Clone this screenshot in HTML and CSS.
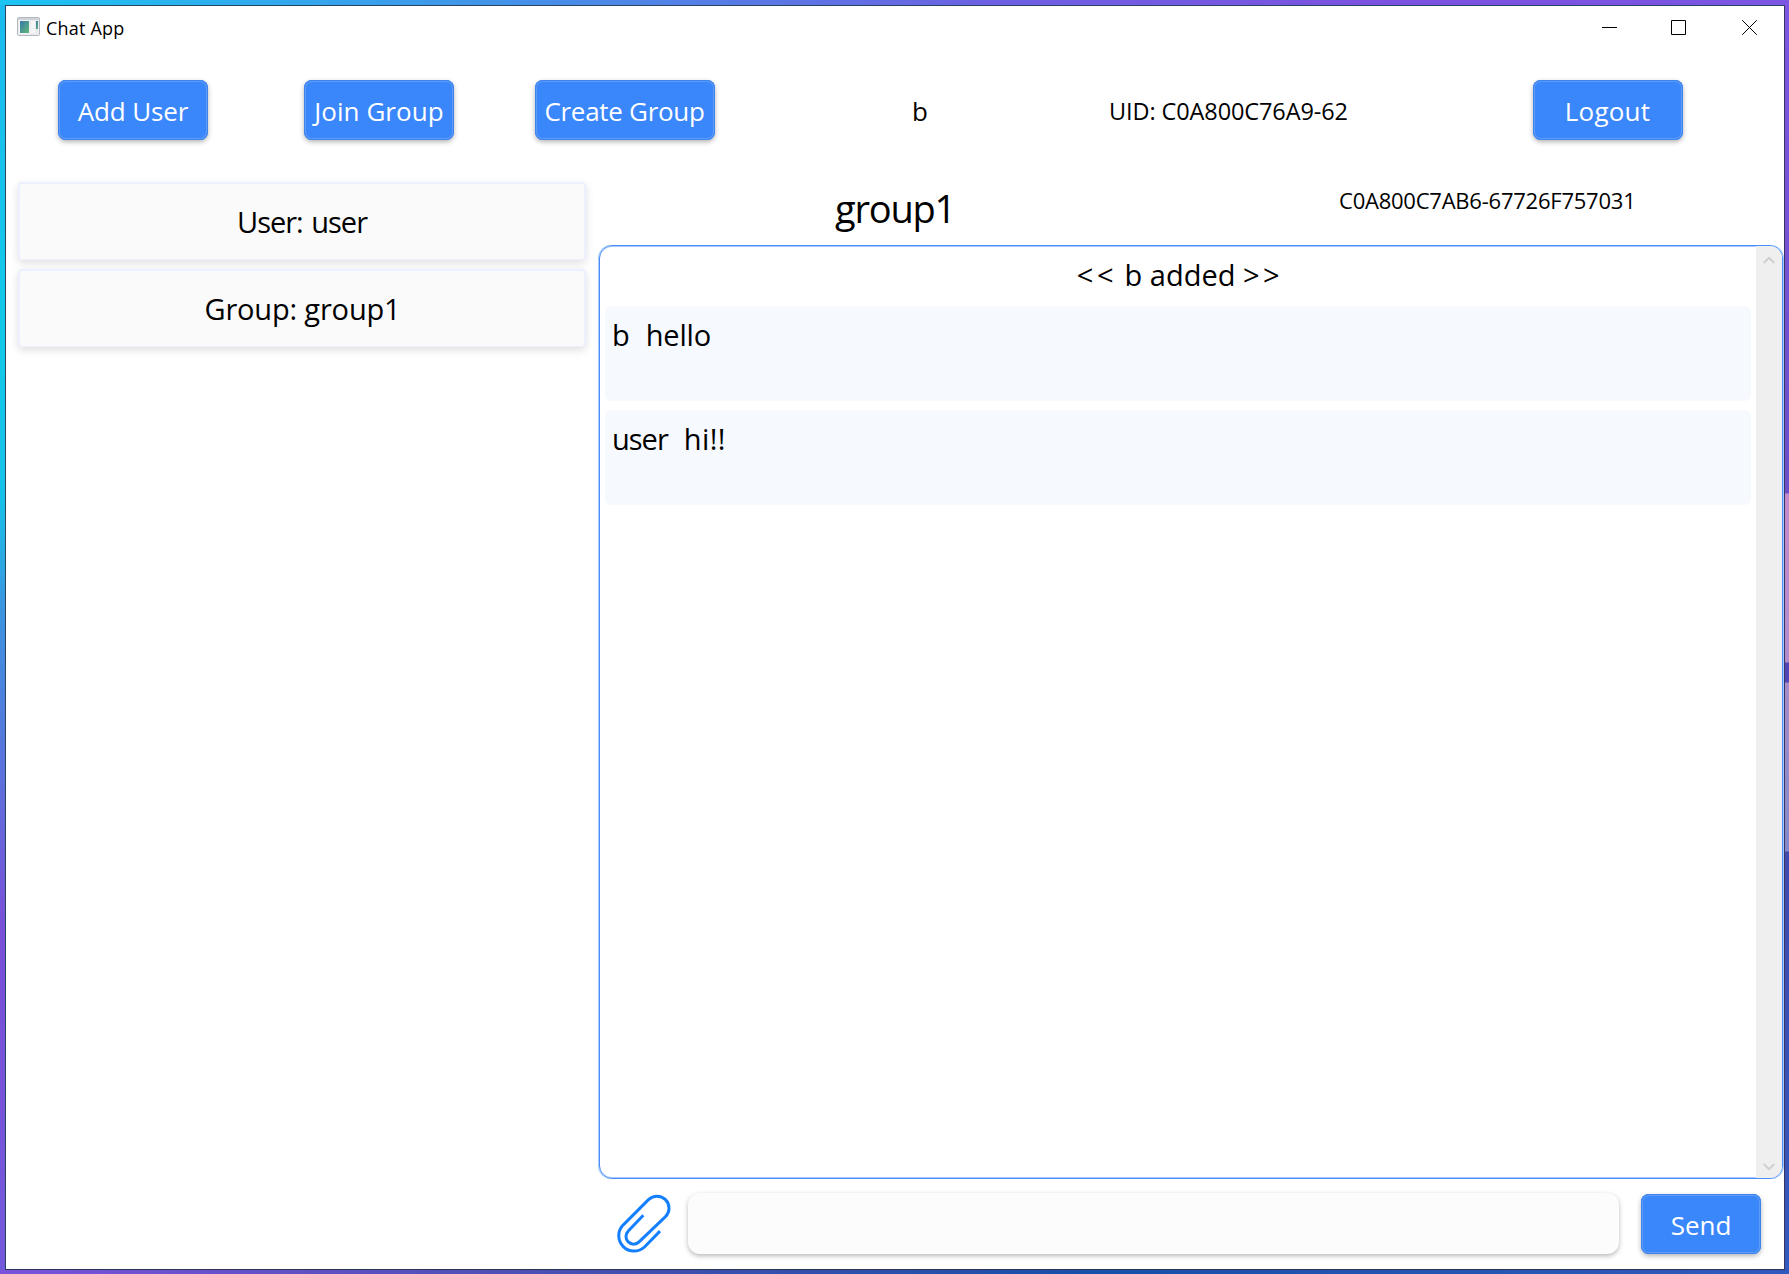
FILE: index.html
```html
<!DOCTYPE html>
<html lang="en">
<head>
<meta charset="utf-8">
<title>Chat App</title>
<link rel="stylesheet" href="styles.css">
</head>
<body class="desktop">
<div class="window">
  <header class="titlebar">
    <svg class="app-icon" viewBox="0 0 23 20">
      <defs>
        <linearGradient id="pane" x1="0" y1="0" x2="1" y2="1"><stop offset="0" stop-color="#3b78a8"/><stop offset="1" stop-color="#5fb878"/></linearGradient>
      </defs>
      <rect x=".5" y=".5" width="22" height="18" rx="1" fill="#e9ebee" stroke="#b3b8bf"/>
      <rect x="1" y="1" width="21" height="2" fill="#cfd3d9"/>
      <rect x="2" y="3.5" width="10.5" height="13" fill="#f8f8f8"/>
      <rect x="3" y="4" width="9" height="12" fill="url(#pane)"/>
      <rect x="14" y="4" width="4" height="7" fill="#f6f6f6"/>
      <rect x="14" y="12" width="4" height="4" fill="#f6f6f6"/>
      <rect x="19" y="4" width="2" height="8" fill="url(#pane)"/>
    </svg>
    <span class="app-title">Chat App</span>
    <div class="controls">
      <svg viewBox="0 0 15 15"><path d="M0 7.5H15"/></svg>
      <svg viewBox="0 0 15 15"><path d="M.5 .5H14.5V14.5H.5Z"/></svg>
      <svg class="close" viewBox="0 0 15 15"><path d="M.2 .2L14.8 14.8M14.8 .2L.2 14.8"/></svg>
    </div>
  </header>
  <nav class="toolbar">
    <button class="btn add">Add User</button>
    <button class="btn join">Join Group</button>
    <button class="btn create">Create Group</button>
    <span class="name">b</span>
    <span class="uid">UID: C0A800C76A9-62</span>
    <button class="btn logout">Logout</button>
  </nav>
  <main class="content">
    <aside class="contacts">
      <div class="card card-user">User: user</div>
      <div class="card card-group">Group: group1</div>
    </aside>
    <section class="chat">
      <div class="chat-head">
        <span class="group-name">group1</span>
        <span class="group-id">C0A800C7AB6-67726F757031</span>
      </div>
      <div class="log">
        <div class="messages">
          <div class="notice"><span class="mark">&lt;&lt;</span> b added <span class="mark">&gt;&gt;</span></div>
          <div class="message"><span>b</span><span class="text">hello</span></div>
          <div class="message"><span class="sender">user</span><span class="text reply">hi!!</span></div>
        </div>
        <div class="scrollbar">
          <svg viewBox="0 0 12 8"><path d="M.8 7L6 1.8L11.2 7"/></svg>
          <svg viewBox="0 0 12 8"><path d="M.8 1L6 6.2L11.2 1"/></svg>
        </div>
      </div>
      <div class="composer">
        <svg class="clip" viewBox="78 100 168 182"><path d="M210 214L163.5 261.5A46 46 0 0 1 98.5 196.5L175.5 119.5A36 36 0 0 1 226.5 170.5L147.3 246.3A23 23 0 0 1 114.7 213.7L160 166"/></svg>
        <input class="entry" type="text" aria-label="Message">
        <button class="btn send">Send</button>
      </div>
    </section>
  </main>
</div>
</body>
</html>
```
FILE: styles.css
```css
* { box-sizing: border-box; }

.desktop {
  margin: 0;
  width: 1789px;
  height: 1274px;
  padding: 5px 4px 4px 5px;
  overflow: hidden;
  font-family: "Open Sans", "Noto Sans", sans-serif;
  color: #000;
  background:
    linear-gradient(90deg, #7a52dc 0, #454fae 600px, #1650a8 1100px, #3159bd 1789px) 0 1270px / 1789px 4px no-repeat,
    linear-gradient(90deg, #1cc4f2 0, #3f98ea 450px, #6e60e2 1000px, #7c52e0 1400px, #7a56e2 1789px) 0 0 / 1789px 5px no-repeat,
    linear-gradient(180deg, #7a56e2 0, #6a4fc8 493px, #c48acb 494px, #b08ccc 662px, #5146b4 663px, #5146b4 682px, #a58cc8 683px, #8289cb 851px, #4149ad 852px, #3159bd 1274px) 1785px 0 / 4px 1274px no-repeat,
    linear-gradient(180deg, #1cbaf0 0, #12c9e9 330px, #16c1e9 500px, #3c94e0 610px, #7a4fd9 930px, #7359dc 1274px);
}

.window {
  display: flex;
  flex-direction: column;
  height: 1265px;
  background: #fff;
  border: 1px solid #27455f;
  border-right-color: #3a3360;
  border-bottom-color: #2c3354;
}

.titlebar {
  display: flex;
  align-items: flex-start;
  height: 74px;
  padding: 11px 27px 0 11px;
}
.app-icon { width: 23px; height: 20px; }
.app-title { margin: -1px 0 0 6px; font-size: 18px; line-height: 24px; letter-spacing: 0.2px; }
.controls { display: flex; gap: 54px; margin: 3px 0 0 auto; }
.controls svg { width: 15px; height: 15px; fill: none; stroke: #000; stroke-width: 1; }
.controls .close { margin-left: 2px; }

.toolbar {
  display: flex;
  align-items: flex-start;
  height: 76px;
  padding: 0 101.5px 0 52px;
}
.btn {
  width: 150px;
  height: 60px;
  padding: 2px 0 0;
  font: 26px/36px "Open Sans", "Noto Sans", sans-serif;
  color: #fff;
  white-space: nowrap;
  background: #3a86fb;
  border: 0;
  border-radius: 8px;
  box-shadow: inset 0 0 0 1px #3d84f2, inset 0 0 0 2px #5e9bf5, 0 2px 5px rgba(0, 0, 0, 0.3);
}
.add { letter-spacing: -0.15px; }
.join { margin-left: 96px; letter-spacing: 0.05px; }
.create { width: 180px; margin-left: 81px; padding-right: 1px; letter-spacing: -0.3px; }
.name { width: 20px; margin: 13px 0 0 197px; font-size: 26px; line-height: 36px; }
.uid { margin: 13px 0 0 177px; font-size: 23.5px; line-height: 36px; letter-spacing: -0.1px; white-space: nowrap; }
.logout { margin-left: auto; letter-spacing: 0.2px; }

.content { display: flex; flex: 1; min-height: 0; }
.contacts {
  display: flex;
  flex-direction: column;
  gap: 9px;
  width: 592px;
  padding: 26px 12px 0 12px;
}
.card {
  height: 78px;
  padding-top: 18px;
  font-size: 29px;
  line-height: 40px;
  text-align: center;
  background: #fafafa;
  border: 2px solid #ecf0ff;
  border-bottom-width: 1px;
  border-radius: 4px;
  box-shadow: 0 3px 8px rgba(0, 0, 0, 0.13);
}
.card-user { word-spacing: 2px; letter-spacing: -1px; }
.card-group { padding-left: 1px; letter-spacing: -0.17px; }

.chat { display: flex; flex: 1; flex-direction: column; min-width: 0; }
.chat-head { display: flex; align-items: flex-start; height: 89px; }
.group-name { width: 130px; margin: 26px 0 0 237px; font-size: 38px; line-height: 52px; letter-spacing: -1.2px; }
.group-id { margin: 28px 0 0 374px; font-size: 22px; line-height: 32px; letter-spacing: -0.23px; white-space: nowrap; }

.log {
  display: flex;
  width: 1184px;
  height: 934px;
  margin-left: 1px;
  border: 1px solid #4a8ff7;
  border-radius: 13px;
  box-shadow: -1px 0 0 #a9cafd, 1px 0 0 #a9cafd, inset 0 1px 0 #a9cafd, inset 0 -1px 0 #a9cafd;
  overflow: hidden;
}
.messages {
  display: flex;
  flex: 1;
  flex-direction: column;
  gap: 9px;
  padding: 9px 5px 0 5px;
  font-size: 29px;
  line-height: 40px;
}
.notice { height: 42px; padding-left: 4px; text-align: center; }
.mark { letter-spacing: 3.5px; }
.message {
  display: flex;
  height: 95px;
  padding: 9px 7px 0;
  background: #f6f9fe;
  border-radius: 6px;
}
.sender { letter-spacing: -1px; }
.text { margin-left: 16px; letter-spacing: -0.2px; }
.reply { letter-spacing: 0.4px; }
.scrollbar {
  display: flex;
  flex-direction: column;
  justify-content: space-between;
  align-items: center;
  width: 26px;
  padding: 10px 0 7px;
  background: #efefef;
}
.scrollbar svg { width: 12px; height: 8px; fill: none; stroke: #cfcfcf; stroke-width: 2; }

.composer { display: flex; padding: 14px 23px 0 18px; }
.clip { width: 56px; height: 61px; fill: none; stroke: #1580ff; stroke-width: 9; stroke-linejoin: round; }
.entry {
  flex: 1;
  height: 61px;
  margin: 0 22px 0 16px;
  border: 0;
  border-radius: 12px;
  background: #fcfcfc;
  box-shadow: 0 2px 5px rgba(0, 0, 0, 0.28);
}
.send { width: 120px; margin-top: 1px; }
```
